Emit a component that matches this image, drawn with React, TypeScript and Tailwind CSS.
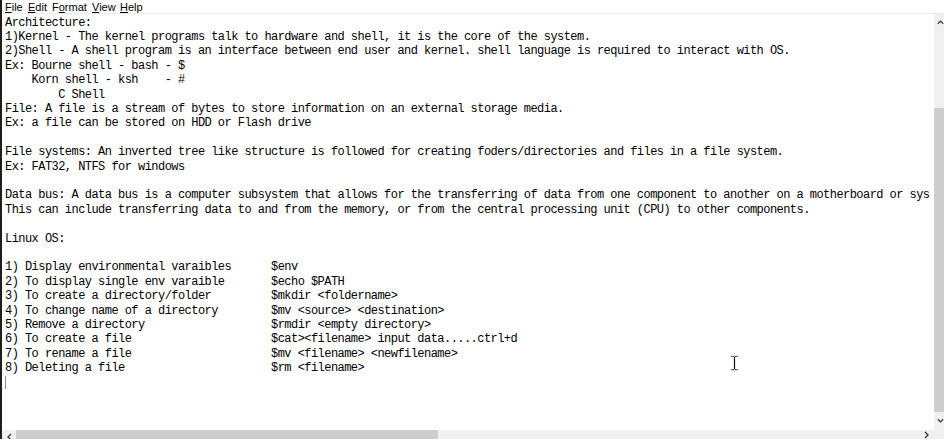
import React from "react";

const cmds: [string, string][] = [
  ["1) Display environmental varaibles", "$env"],
  ["2) To display single env varaible", "$echo $PATH"],
  ["3) To create a directory/folder", "$mkdir <foldername>"],
  ["4) To change name of a directory", "$mv <source> <destination>"],
  ["5) Remove a directory", "$rmdir <empty directory>"],
  ["6) To create a file", "$cat><filename> input data.....ctrl+d"],
  ["7) To rename a file", "$mv <filename> <newfilename>"],
  ["8) Deleting a file", "$rm <filename>"],
];

const lines: string[] = [
  "Architecture:",
  "1)Kernel - The kernel programs talk to hardware and shell, it is the core of the system.",
  "2)Shell - A shell program is an interface between end user and kernel. shell language is required to interact with OS.",
  "Ex: Bourne shell - bash - $",
  "    Korn shell - ksh    - #",
  "        C Shell",
  "File: A file is a stream of bytes to store information on an external storage media.",
  "Ex: a file can be stored on HDD or Flash drive",
  "",
  "File systems: An inverted tree like structure is followed for creating foders/directories and files in a file system.",
  "Ex: FAT32, NTFS for windows",
  "",
  "Data bus: A data bus is a computer subsystem that allows for the transferring of data from one component to another on a motherboard or sys",
  "This can include transferring data to and from the memory, or from the central processing unit (CPU) to other components.",
  "",
  "Linux OS:",
  "",
  ...cmds.map(([a, b]) => a.padEnd(40, " ") + b),
];

function MenuItem({ pre, u, post, w }: { pre: string; u: string; post: string; w: string }) {
  return (
    <span className={`${w} shrink-0 whitespace-nowrap`}>
      {pre}
      <span className="underline underline-offset-[1px]">{u}</span>
      {post}
    </span>
  );
}

export default function App() {
  return (
    <div className="relative w-[944px] h-[439px] overflow-hidden bg-white border-l-[2px] border-[#1e1e1e] flex flex-col">
      {/* menu bar */}
      <div
        className="h-[14px] shrink-0 flex items-center pl-[3px] text-[11px] leading-[12px] text-black border-b border-[#ececec] bg-white"
        style={{ fontFamily: '"Liberation Sans", Arial, sans-serif' }}
      >
        <div className="flex">
          <MenuItem pre="" u="F" post="ile" w="w-[23px]" />
          <MenuItem pre="" u="E" post="dit" w="w-[24px]" />
          <MenuItem pre="F" u="o" post="rmat" w="w-[40px]" />
          <MenuItem pre="" u="V" post="iew" w="w-[28px]" />
          <MenuItem pre="" u="H" post="elp" w="w-[30px]" />
        </div>
      </div>

      {/* middle */}
      <div className="flex-1 flex min-h-0">
        <div
          className="flex-1 min-w-0 overflow-hidden mr-[4px] pl-[3px] pt-[1.5px] text-black text-[12px] leading-[14.42px] tracking-[-0.55px] whitespace-pre"
          style={{ fontFamily: '"Liberation Mono", "DejaVu Sans Mono", monospace' }}
        >
          {lines.map((l, i) => (
            <div key={i} className="h-[14.42px]">
              {l === "" ? "\u00a0" : l}
            </div>
          ))}
          <div className="h-[14.42px] flex items-center">
            <span className="inline-block w-[1px] h-[13px] bg-[#8a8a8a]" />
          </div>
        </div>
        {/* vertical scrollbar */}
        <div className="w-[10px] shrink-0 bg-[#f0f0f0] flex flex-col">
          <div className="h-[16px] flex items-center justify-start pl-[3px]">
            <svg width="8" height="6" viewBox="0 0 8 6">
              <path d="M1 5 L4 2 L7 5" fill="none" stroke="#333" strokeWidth="1.3" />
            </svg>
          </div>
          <div className="h-[78px]" />
          <div className="flex-1 bg-[#cdcdcd]" />
          <div className="h-[18px] flex items-center justify-start pl-[3px]">
            <svg width="8" height="6" viewBox="0 0 8 6">
              <path d="M1 1 L4 4 L7 1" fill="none" stroke="#333" strokeWidth="1.3" />
            </svg>
          </div>
        </div>
      </div>

      {/* horizontal scrollbar */}
      <div className="h-[9px] shrink-0 flex bg-[#f0f0f0]">
        <div className="w-[14px] flex items-start justify-center pt-[3px]">
          <svg width="6" height="8" viewBox="0 0 6 8">
            <path d="M5 1 L2 4 L5 7" fill="none" stroke="#333" strokeWidth="1.3" />
          </svg>
        </div>
        <div className="w-[422px] bg-[#cdcdcd]" />
        <div className="flex-1" />
        <div className="w-[14px] flex items-start justify-center pt-[1px]">
          <svg width="6" height="8" viewBox="0 0 6 8">
            <path d="M1 1 L4 4 L1 7" fill="none" stroke="#333" strokeWidth="1.3" />
          </svg>
        </div>
        <div className="w-[10px] bg-[#f0f0f0]" />
      </div>

      {/* I-beam mouse cursor */}
      <svg
        className="absolute left-[727px] top-[354px]"
        width="11"
        height="18"
        viewBox="0 0 11 18"
      >
        <path
          d="M1.5 1.5 H4.5 L5.5 2.5 L6.5 1.5 H9.5 V3 H6.5 V15 H9.5 V16.5 H6.5 L5.5 15.5 L4.5 16.5 H1.5 V15 H4.5 V3 H1.5 Z"
          fill="#111"
          stroke="#fff"
          strokeWidth="0.8"
        />
      </svg>
    </div>
  );
}
